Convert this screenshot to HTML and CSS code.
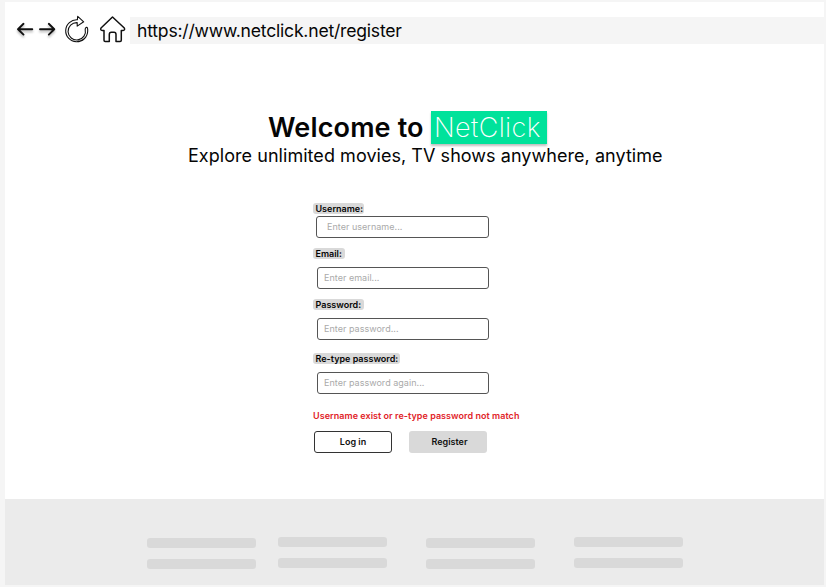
FILE: index.html
```html
<!DOCTYPE html>
<html lang="en">
<head>
<meta charset="utf-8">
<title>NetClick - Register</title>
<link rel="stylesheet" href="styles.css">
</head>
<body>
<div class="window">
  <nav class="toolbar">
    <svg class="nav-icons" width="125" height="42" viewBox="5 10 125 42" fill="none" stroke="#111" stroke-linecap="round" stroke-linejoin="round">
      <g class="arrows" stroke-width="1.9">
        <path d="M32.3 29.2H18M23.5 23.8L18 29.2L23.5 34.6"/>
        <path d="M40 29.2H54.3M48.8 23.8L54.3 29.2L48.8 34.6"/>
      </g>
      <path stroke-width="1.1" d="M77.7 16.3L83.7 21.8L77.2 26.1L77.2 22.6A8.7 8.7 0 1 0 85.2 29.2Q85.5 27.2 86.7 27.4Q87.9 27.6 87.7 31A11 11 0 1 1 77.4 19.8Z"/>
      <path stroke-width="1.5" d="M112.5 17L101 28Q100 30.3 102.3 30.5H104V40.2Q104 41.4 105.2 41.4H109.3V34.5Q109.3 32.3 111.3 32.3H114Q116 32.3 116 34.5V41.4H120.1Q121.3 41.4 121.3 40.2V30.5H123Q125.3 30.3 124.3 28Z"/>
    </svg>
    <div class="address">https://www.netclick.net/register</div>
  </nav>
  <main>
    <h1><span class="welcome">Welcome to</span><span class="brand">NetClick</span></h1>
    <p class="tagline">Explore unlimited movies, TV shows anywhere, anytime</p>
    <form>
      <div class="field user"><label for="username">Username:</label><input id="username" placeholder="Enter username..."></div>
      <div class="field email"><label for="email">Email:</label><input id="email" placeholder="Enter email..."></div>
      <div class="field pass"><label for="password">Password:</label><input id="password" placeholder="Enter password..."></div>
      <div class="field again"><label for="again">Re-type password:</label><input id="again" placeholder="Enter password again..."></div>
      <p class="error">Username exist or re-type password not match</p>
      <div class="actions"><button type="button" class="login">Log in</button><button type="button" class="register">Register</button></div>
    </form>
  </main>
  <footer>
    <div class="links low"><i></i><i></i></div>
    <div class="links"><i></i><i></i></div>
    <div class="links low"><i></i><i></i></div>
    <div class="links"><i></i><i></i></div>
  </footer>
</div>
</body>
</html>
```
FILE: styles.css
```css
* { box-sizing: border-box; }
body { margin: 0; height: 587px; padding: 2px 2px 2px 5px; overflow: hidden; background: #f5f5f5; font-family: Inter, "Liberation Sans", sans-serif; color: #050505; }
.window { display: flex; flex-direction: column; height: 583px; background: #fff; }
.toolbar { display: flex; align-items: flex-start; height: 107px; padding-top: 8px; }
.nav-icons { flex: none; }
.arrows { filter: drop-shadow(0 2px 1px rgba(0, 0, 0, .28)); }
.address { flex: 1; height: 27px; margin-top: 7px; padding-left: 7px; background: #f5f5f5; font-size: 17.6px; letter-spacing: -.22px; line-height: 27px; white-space: nowrap; }
main { height: 390px; }
h1 { display: flex; align-items: flex-start; margin: 0 0 0 263px; padding-top: 2px; height: 36px; font-size: 27px; line-height: 33px; font-weight: 600; white-space: nowrap; }
.welcome { width: 163px; letter-spacing: .15px; }
.brand { width: 116px; height: 33px; padding-left: 3px; background: #00e29b; color: #fff; font-weight: 200; letter-spacing: .4px; line-height: 33px; box-shadow: 0 2px 2px rgba(0, 0, 0, .25); }
.tagline { margin: 0 0 0 183px; height: 58px; padding-top: 1px; font-size: 18px; letter-spacing: .045px; line-height: 20px; white-space: nowrap; }
form { margin-left: 308px; width: 220px; }
.field { display: flex; flex-direction: column; align-items: flex-start; height: 51px; }
.field label { height: 11px; padding: 0 2px 0 2.5px; border-radius: 3px; background: #d9d9d9; font-size: 9px; line-height: 11px; font-weight: 600; white-space: nowrap; }
.field input { width: 172px; height: 22px; margin: 8px 0 0 4px; padding: 0 7px 2px 6px; border: 1px solid #555; border-radius: 3px; background: #fff; font: 9px/18px Inter, sans-serif; letter-spacing: .03px; }
.field input::placeholder { color: #aaa; opacity: 1; }
.user { height: 45px; }
.user label { padding-right: 1px; }
.user input { width: 173px; margin: 2px 0 0 3px; padding-left: 10px; }
.email label, .pass label { padding-right: 3px; }
.pass { height: 54px; }
.again { height: 55px; }
.error { margin: 0; height: 23px; color: #e12328; font-size: 9px; letter-spacing: .045px; line-height: 15px; font-weight: 600; white-space: nowrap; }
.actions { display: flex; gap: 17px; padding-left: 1px; }
button { width: 78px; height: 22px; padding: 0; border: 0; border-radius: 3px; font: 600 9px/20px Inter, sans-serif; color: #111; }
.login { border: 1px solid #333; background: #fff; }
.register { background: #d9d9d9; padding-left: 3px; }
footer { display: flex; flex: 1; padding: 38px 0 0 142px; background: #ebebeb; }
.links { display: flex; flex-direction: column; gap: 11px; width: 109px; margin-right: 39px; }
.links:first-child { margin-right: 22px; }
.links.low { padding-top: 1px; }
.links i { height: 10px; border-radius: 3px; background: #d9d9d9; }
```
